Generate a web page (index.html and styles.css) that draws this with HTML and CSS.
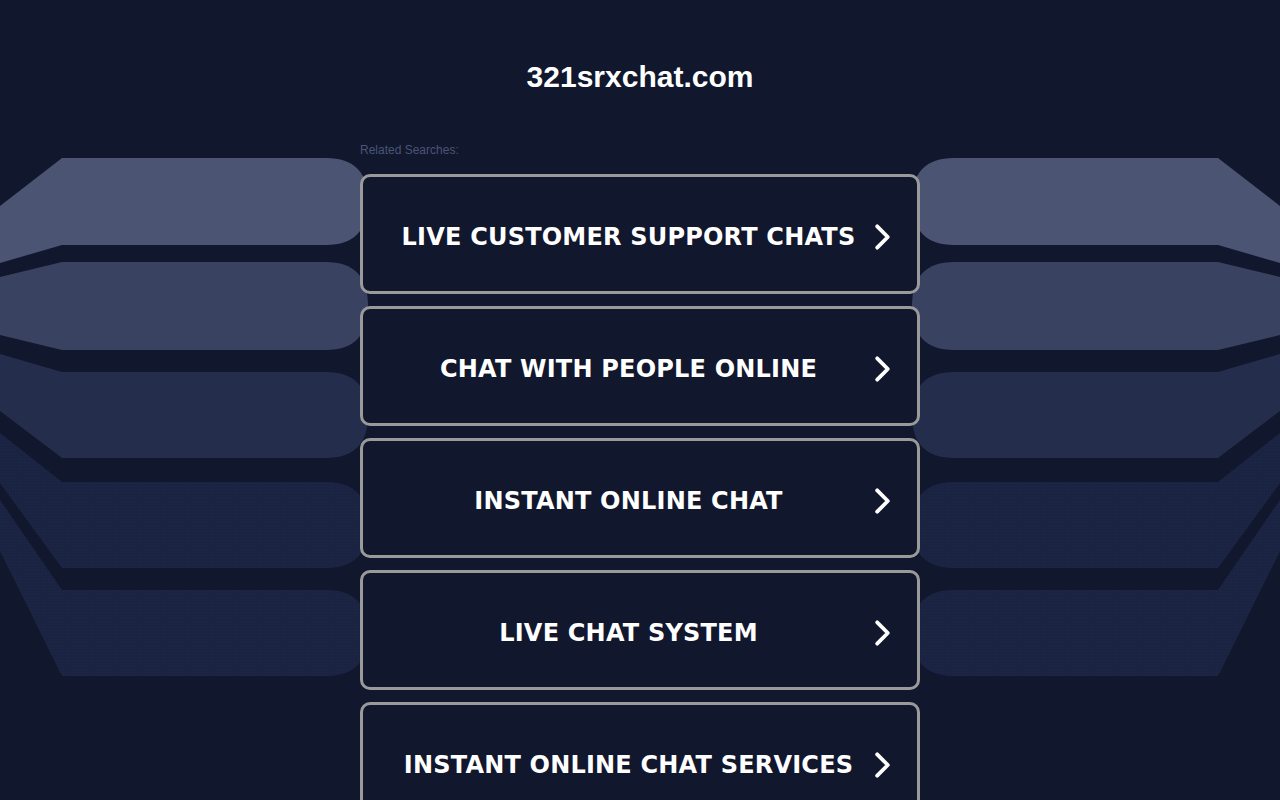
FILE: index.html
```html
<!DOCTYPE html>
<html lang="en">
<head>
<meta charset="utf-8">
<title>321srxchat.com</title>
<link rel="stylesheet" href="styles.css">
</head>
<body>
<svg class="backdrop" width="1280" height="800" viewBox="0 0 1280 800" aria-hidden="true">
  <defs>
    <pattern id="dots" width="3" height="3" patternUnits="userSpaceOnUse">
      <rect width="3" height="3" fill="#1b2342"/>
      <rect width="1" height="1" fill="#1f2848"/>
    </pattern>
    <g id="bands">
      <path fill="#4b5573" d="M0,206 L62,158 H326 Q368,158 368,201 Q368,245 326,245 H62 L0,263 Z"/>
      <path fill="#394261" d="M0,277 L62,262 H326 Q368,262 368,306 Q368,350 326,350 H62 L0,335 Z"/>
      <path fill="#252d4c" d="M0,354 L62,372 H326 Q368,372 368,415 Q368,458 326,458 H62 L0,411 Z"/>
      <path fill="url(#dots)" d="M0,433 L62,482 H326 Q368,482 368,525 Q368,568 326,568 H62 L0,483 Z"/>
      <path fill="url(#dots)" d="M0,500 L62,590 H326 Q368,590 368,633 Q368,676 326,676 H62 L0,551 Z"/>
    </g>
  </defs>
  <use href="#bands"/>
  <use href="#bands" transform="translate(1280,0) scale(-1,1)"/>
</svg>

<main class="page">
  <h1 class="domain">321srxchat.com</h1>
  <p class="related">Related Searches:</p>
  <ul class="links">
    <li><a class="link" href="#"><span class="label">LIVE CUSTOMER SUPPORT CHATS</span><svg class="chev" viewBox="0 0 16 26"><path d="M3,3 L13,13 L3,23"/></svg></a></li>
    <li><a class="link" href="#"><span class="label">CHAT WITH PEOPLE ONLINE</span><svg class="chev" viewBox="0 0 16 26"><path d="M3,3 L13,13 L3,23"/></svg></a></li>
    <li><a class="link" href="#"><span class="label">INSTANT ONLINE CHAT</span><svg class="chev" viewBox="0 0 16 26"><path d="M3,3 L13,13 L3,23"/></svg></a></li>
    <li><a class="link" href="#"><span class="label">LIVE CHAT SYSTEM</span><svg class="chev" viewBox="0 0 16 26"><path d="M3,3 L13,13 L3,23"/></svg></a></li>
    <li><a class="link" href="#"><span class="label">INSTANT ONLINE CHAT SERVICES</span><svg class="chev" viewBox="0 0 16 26"><path d="M3,3 L13,13 L3,23"/></svg></a></li>
  </ul>
</main>
</body>
</html>
```

FILE: styles.css
```css
html, body {
  margin: 0;
  padding: 0;
  background: #11172d;
  height: 100%;
  overflow: hidden;
}

body {
  position: relative;
  font-family: "Liberation Sans", Arial, sans-serif;
}

.backdrop {
  position: absolute;
  left: 0;
  top: 0;
  z-index: 0;
}

.page {
  position: relative;
  z-index: 1;
  width: 560px;
  margin: 0 auto;
  padding-top: 58px;
}

.domain {
  margin: 0;
  text-align: center;
  color: #ffffff;
  font-family: "Liberation Sans", Arial, sans-serif;
  font-weight: bold;
  font-size: 30px;
  line-height: 38px;
}

.related {
  margin: 47px 0 0;
  font-size: 12px;
  line-height: 14px;
  color: #4a5576;
}

.links {
  list-style: none;
  margin: 17px 0 0;
  padding: 0;
  display: flex;
  flex-direction: column;
  gap: 12px;
}

.link {
  box-sizing: border-box;
  height: 120px;
  display: flex;
  align-items: center;
  gap: 6px;
  padding: 5px 26px 0;
  border: 3px solid #9a9a9a;
  border-radius: 10px;
  background: #11172d;
  text-decoration: none;
}

.label {
  flex: 1;
  text-align: center;
  color: #ffffff;
  font-family: "DejaVu Sans", Verdana, sans-serif;
  font-weight: bold;
  font-size: 24px;
  letter-spacing: 0.2px;
  white-space: nowrap;
}

.chev {
  width: 17px;
  height: 28px;
  flex: none;
}

.chev path {
  fill: none;
  stroke: #ffffff;
  stroke-width: 3.6;
  stroke-linecap: round;
  stroke-linejoin: round;
}
```
